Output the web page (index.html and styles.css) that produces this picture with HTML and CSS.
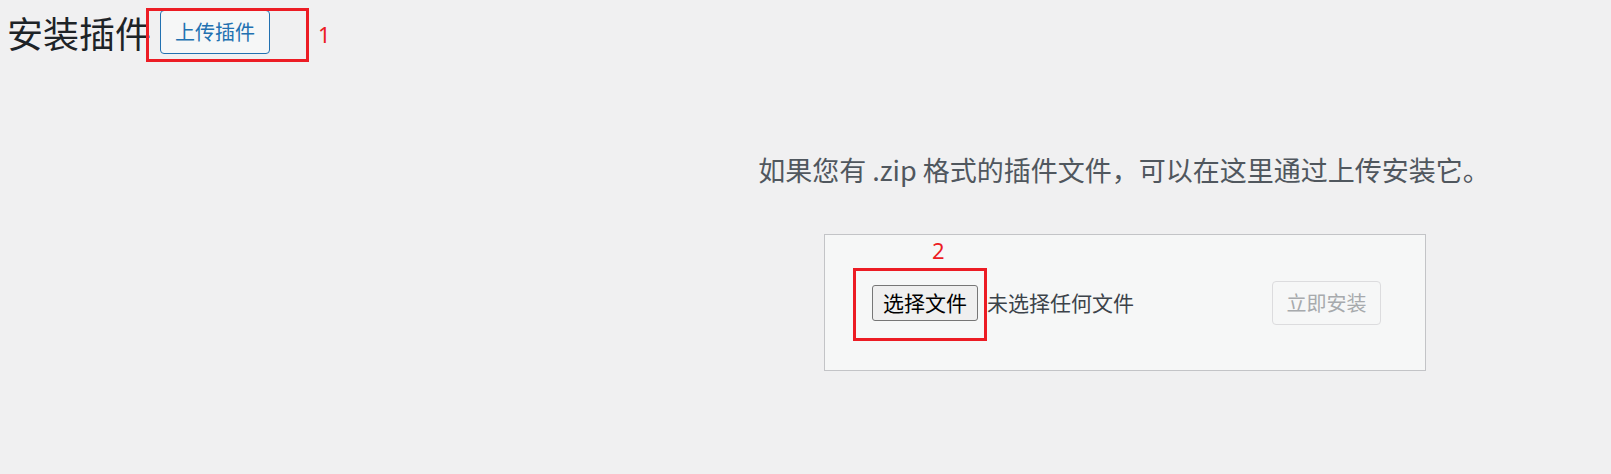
FILE: index.html
```html
<!DOCTYPE html>
<html lang="zh-CN">
<head>
<meta charset="utf-8">
<title>安装插件</title>
<link rel="stylesheet" href="styles.css">
</head>
<body>
<div class="wrap">
  <header class="page-head">
    <h1 class="page-title">安装插件</h1>
    <span class="title-action">上传插件</span>
    <span class="mark mark-1"></span>
    <span class="mark-num num-1">1</span>
  </header>
  <main class="upload">
    <p class="install-help">如果您有 .zip 格式的插件文件，可以在这里通过上传安装它。</p>
    <form class="upload-form">
      <div class="file-field">
        <span class="file-btn">选择文件</span>
        <span class="file-name">未选择任何文件</span>
        <span class="mark mark-2"></span>
        <span class="mark-num num-2">2</span>
      </div>
      <span class="install-btn">立即安装</span>
    </form>
  </main>
</div>
</body>
</html>
```

FILE: styles.css
```css
* { box-sizing: border-box; }
html, body {
  margin: 0;
  padding: 0;
  background: #f0f0f1;
}
body {
  width: 1611px;
  height: 474px;
  overflow: hidden;
  font-family: "Noto Sans CJK SC", "Noto Sans", sans-serif;
  color: #3c434a;
}
.wrap {
  position: relative;
}
.page-head {
  position: relative;
  display: flex;
  align-items: center;
  gap: 9px;
  padding: 10px 0 0 7px;
  height: 54px;
}
.page-title {
  margin: 0;
  font-size: 36px;
  font-weight: 400;
  line-height: 44px;
  color: #1d2327;
}
.title-action {
  display: flex;
  align-items: center;
  justify-content: center;
  width: 110px;
  height: 44px;
  border: 1px solid #2271b1;
  border-radius: 4px;
  background: #f6f7f7;
  color: #2271b1;
  font-size: 20px;
  line-height: 1;
}
.mark {
  position: absolute;
  border: 3px solid #ec1c24;
}
.mark-1 {
  left: 146px;
  top: 8px;
  width: 163px;
  height: 54px;
}
.mark-num {
  position: absolute;
  color: #ec1c24;
  font-size: 22px;
  line-height: 1;
  font-family: "Noto Sans", "Liberation Sans", sans-serif;
}
.num-1 {
  left: 318px;
  top: 23px;
}
.upload {
  margin-left: 637px;
  text-align: center;
}
.install-help {
  margin: 98px 0 0;
  font-size: 27px;
  line-height: 36px;
  color: #50575e;
}
.upload-form {
  display: flex;
  align-items: center;
  justify-content: space-between;
  width: 602px;
  height: 137px;
  margin: 46px 0 0 187px;
  padding: 0 44px 0 47px;
  background: #f6f7f7;
  border: 1px solid #c3c4c7;
}
.file-field {
  position: relative;
  display: flex;
  align-items: center;
  gap: 9px;
}
.file-btn {
  display: flex;
  align-items: center;
  justify-content: center;
  width: 106px;
  height: 36px;
  border: 1px solid #767676;
  border-radius: 3px;
  background: #efefef;
  color: #000;
  font-size: 21px;
  line-height: 1;
}
.file-name {
  font-size: 21px;
  line-height: 1;
  color: #3c434a;
}
.mark-2 {
  left: -19px;
  top: -17px;
  width: 134px;
  height: 73px;
}
.num-2 {
  left: 60px;
  top: -46px;
}
.install-btn {
  display: flex;
  align-items: center;
  justify-content: center;
  width: 109px;
  height: 44px;
  border: 1px solid #dcdcde;
  border-radius: 4px;
  background: #f6f7f7;
  color: #a7aaad;
  font-size: 20px;
  line-height: 1;
}
```
